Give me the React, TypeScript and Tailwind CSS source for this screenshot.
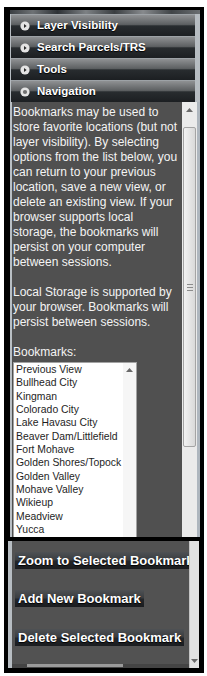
import React from "react";

const intro = [
  "Bookmarks may be used to",
  "store favorite locations (but not",
  "layer visibility). By selecting",
  "options from the list below, you",
  "can return to your previous",
  "location, save a new view, or",
  "delete an existing view. If your",
  "browser supports local",
  "storage, the bookmarks will",
  "persist on your computer",
  "between sessions.",
  "",
  "Local Storage is supported by",
  "your browser. Bookmarks will",
  "persist between sessions.",
  "",
  "Bookmarks:",
];

const bookmarks = [
  "Previous View",
  "Bullhead City",
  "Kingman",
  "Colorado City",
  "Lake Havasu City",
  "Beaver Dam/Littlefield",
  "Fort Mohave",
  "Golden Shores/Topock",
  "Golden Valley",
  "Mohave Valley",
  "Wikieup",
  "Meadview",
  "Yucca",
];

const panels = ["Layer Visibility", "Search Parcels/TRS", "Tools", "Navigation"];

function PanelIcon({ open }: { open?: boolean }) {
  return (
    <svg width="10" height="10" viewBox="0 0 10 10" className="shrink-0">
      <circle cx="5" cy="5" r="4.6" fill="#e4e4e4" />
      {open ? (
        <circle cx="5" cy="5" r="2.1" fill="#707070" />
      ) : (
        <path d="M4 2.9 L6.6 5 L4 7.1 Z" fill="#2b2b2b" />
      )}
    </svg>
  );
}

function Arrow({ up, className }: { up?: boolean; className?: string }) {
  return (
    <svg width="7" height="4" viewBox="0 0 7 4" className={className}>
      <path d={up ? "M0 4 L3.5 0 L7 4 Z" : "M0 0 L3.5 4 L7 0 Z"} fill="#6a6a6a" />
    </svg>
  );
}

function ActionButton({ label }: { label: string }) {
  return (
    <div className="w-fit shrink-0 whitespace-nowrap px-[3px] h-[17px] text-[13px] leading-[17px] font-bold text-white [text-shadow:0_1px_1px_#000] bg-[linear-gradient(to_bottom,#4e5154_0%,#3b3e41_45%,#23262a_55%,#1a1c1f_100%)]">
      {label}
    </div>
  );
}

export default function App() {
  return (
    <div className="w-[207px] h-[676px] overflow-hidden bg-white pt-[7px] [font-family:'Liberation_Sans',Arial,sans-serif]">
      {/* main widget frame */}
      <div className="ml-[4px] w-[200px] h-[530px] bg-black pl-[6px] pr-[4px] pt-[3px] flex flex-col overflow-hidden">
        <div className="h-[4px] shrink-0 bg-[linear-gradient(to_right,#3b3f43,#6e7275_12%,#2e3236_25%,#7d8184_40%,#3a3e41_55%,#878a8d_70%,#414548_85%,#6a6e71)]" />

        <div className="shrink-0 bg-[#b6bcc1] pl-[1px] pr-[5px]">
          {panels.map((p, i) => (
            <div
              key={p}
              className="flex h-[22px] items-center border-t border-[#9da2a6] pl-[9px] text-[11.5px] font-bold text-white [text-shadow:0_1px_1px_#000] bg-[linear-gradient(to_bottom,#8f9193_0%,#5d6062_45%,#282c2f_52%,#1c1f22_100%)]"
            >
              <PanelIcon open={i === 3} />
              <span className="ml-[7px]">{p}</span>
            </div>
          ))}
        </div>

        <div className="flex h-[435px] shrink-0">
          <div className="w-[2px] bg-[#b9bfc4]" />
          <div className="flex-1 overflow-hidden bg-[#505050] pl-[1px] pt-[3px] text-[12px] leading-[15px] text-[#f4f4f4]">
            {intro.map((l, i) =>
              l ? (
                <div key={i} className="whitespace-nowrap">
                  {l}
                </div>
              ) : (
                <div key={i} className="h-[15px]" />
              )
            )}
            <div className="mt-[2px] flex h-[200px] w-[124px] border border-[#a3a3a3] bg-white">
              <div className="flex-1 overflow-hidden pl-[2px] text-[10.4px] leading-[13.33px] text-[#1e1e1e]">
                {bookmarks.map((b) => (
                  <div key={b} className="whitespace-nowrap">
                    {b}
                  </div>
                ))}
              </div>
              <div className="w-[13px] bg-[#f6f6f6] flex justify-center pt-[5px]">
                <Arrow up />
              </div>
            </div>
          </div>
          {/* main scrollbar */}
          <div className="w-[15px] bg-[#ebebeb] flex flex-col items-center">
            <div className="h-[16px] flex items-center justify-center">
              <Arrow up />
            </div>
            <div className="mt-[9px] h-[320px] w-[13px] rounded-[2px] border border-[#a4a4a4] bg-[linear-gradient(to_right,#f2f2f2,#d9d9d9)] flex flex-col items-center justify-center gap-[2px]">
              <div className="h-px w-[6px] bg-[#8c8c8c]" />
              <div className="h-px w-[6px] bg-[#8c8c8c]" />
              <div className="h-px w-[6px] bg-[#8c8c8c]" />
            </div>
          </div>
          <div className="w-[3px] bg-[#aeb6be]" />
        </div>
      </div>

      {/* lower crop of the same panel */}
      <div className="ml-[4px] w-[200px] h-[136px] border-t-[4px] border-l-[4px] border-r-[5px] border-b-[5px] border-black flex">
        <div className="w-[4px] bg-[#b7bdc2]" />
        <div className="flex-1 overflow-hidden bg-[#525252] flex flex-col pl-[3px] pt-[11px]">
          <ActionButton label="Zoom to Selected Bookmark" />
          <div className="mt-[21px]">
            <ActionButton label="Add New Bookmark" />
          </div>
          <div className="mt-[22px]">
            <ActionButton label="Delete Selected Bookmark" />
          </div>
          <div className="mt-auto -ml-[3px] h-[4px] bg-[#444444]">
            <div className="ml-[15px] h-[3px] w-[96px] bg-[#9b9b9b]" />
          </div>
        </div>
        <div className="w-[10px] bg-[#e2e2e2] border-l border-[#c4c4c4] flex flex-col items-center justify-end pb-[5px]">
          <Arrow />
        </div>
      </div>
    </div>
  );
}
